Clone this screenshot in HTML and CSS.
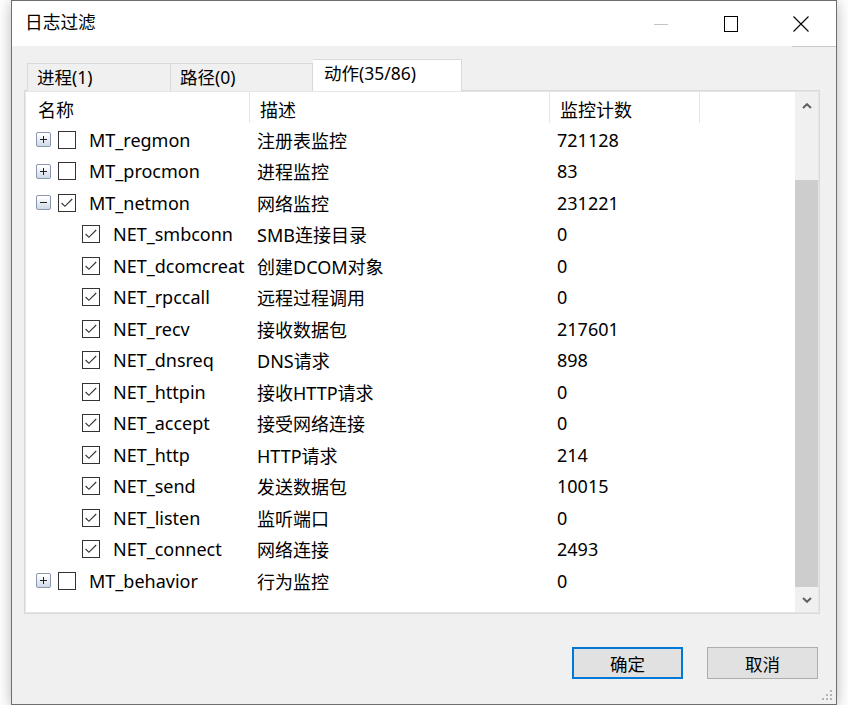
FILE: index.html
```html
<!DOCTYPE html>
<html lang="zh-CN">
<head>
<meta charset="utf-8">
<title>日志过滤</title>
<link rel="stylesheet" href="styles.css">
</head>
<body>
<div class="window">
  <div class="titlebar">
    <span class="title">日志过滤</span>
    <div class="caption">
      <span class="cbtn"><svg width="16" height="16" viewBox="0 0 16 16"><path d="M1 8.5H15" stroke="#c4c4c4" stroke-width="1"/></svg></span>
      <span class="cbtn"><svg width="16" height="16" viewBox="0 0 16 16"><rect x="1.5" y="0.5" width="13" height="15" fill="none" stroke="#000" stroke-width="1"/></svg></span>
      <span class="cbtn close"><svg width="16" height="16" viewBox="0 0 16 16"><path d="M0.5 0.5L15.5 15.5M15.5 0.5L0.5 15.5" stroke="#000" stroke-width="1.1"/></svg></span>
    </div>
  </div>
  <div class="client">
    <div class="tabs">
      <div class="tab t1">进程(1)</div>
      <div class="tab t2">路径(0)</div>
      <div class="tab active">动作(35/86)</div>
    </div>
    <div class="panel">
      <div class="list">
        <div class="main">
          <div class="header">
            <div class="hcell">名称</div>
            <div class="hcell">描述</div>
            <div class="hcell">监控计数</div>
            <div class="hcell last"></div>
          </div>
          <div class="rows">
            <div class="row"><div class="name top"><span class="exp plus"></span><span class="cb"></span><span class="txt">MT_regmon</span></div><div class="desc">注册表监控</div><div class="cnt">721128</div></div>
            <div class="row"><div class="name top"><span class="exp plus"></span><span class="cb"></span><span class="txt">MT_procmon</span></div><div class="desc">进程监控</div><div class="cnt">83</div></div>
            <div class="row"><div class="name top"><span class="exp minus"></span><span class="cb on"></span><span class="txt">MT_netmon</span></div><div class="desc">网络监控</div><div class="cnt">231221</div></div>
            <div class="row"><div class="name child"><span class="cb on"></span><span class="txt">NET_smbconn</span></div><div class="desc">SMB连接目录</div><div class="cnt">0</div></div>
            <div class="row"><div class="name child"><span class="cb on"></span><span class="txt">NET_dcomcreat</span></div><div class="desc">创建DCOM对象</div><div class="cnt">0</div></div>
            <div class="row"><div class="name child"><span class="cb on"></span><span class="txt">NET_rpccall</span></div><div class="desc">远程过程调用</div><div class="cnt">0</div></div>
            <div class="row"><div class="name child"><span class="cb on"></span><span class="txt">NET_recv</span></div><div class="desc">接收数据包</div><div class="cnt">217601</div></div>
            <div class="row"><div class="name child"><span class="cb on"></span><span class="txt">NET_dnsreq</span></div><div class="desc">DNS请求</div><div class="cnt">898</div></div>
            <div class="row"><div class="name child"><span class="cb on"></span><span class="txt">NET_httpin</span></div><div class="desc">接收HTTP请求</div><div class="cnt">0</div></div>
            <div class="row"><div class="name child"><span class="cb on"></span><span class="txt">NET_accept</span></div><div class="desc">接受网络连接</div><div class="cnt">0</div></div>
            <div class="row"><div class="name child"><span class="cb on"></span><span class="txt">NET_http</span></div><div class="desc">HTTP请求</div><div class="cnt">214</div></div>
            <div class="row"><div class="name child"><span class="cb on"></span><span class="txt">NET_send</span></div><div class="desc">发送数据包</div><div class="cnt">10015</div></div>
            <div class="row"><div class="name child"><span class="cb on"></span><span class="txt">NET_listen</span></div><div class="desc">监听端口</div><div class="cnt">0</div></div>
            <div class="row"><div class="name child"><span class="cb on"></span><span class="txt">NET_connect</span></div><div class="desc">网络连接</div><div class="cnt">2493</div></div>
            <div class="row"><div class="name top"><span class="exp plus"></span><span class="cb"></span><span class="txt">MT_behavior</span></div><div class="desc">行为监控</div><div class="cnt">0</div></div>
          </div>
        </div>
        <div class="scrollbar">
          <div class="sbtn up"><svg width="10" height="6" viewBox="0 0 10 6"><path d="M1 5L5 1.2L9 5" fill="none" stroke="#606060" stroke-width="2"/></svg></div>
          <div class="track"><div class="thumb"></div></div>
          <div class="sbtn down"><svg width="10" height="6" viewBox="0 0 10 6"><path d="M1 1L5 4.8L9 1" fill="none" stroke="#606060" stroke-width="2"/></svg></div>
        </div>
      </div>
    </div>
    <div class="buttons">
      <div class="btn default">确定</div>
      <div class="btn">取消</div>
    </div>
    <svg class="grip" width="14" height="14" viewBox="0 0 14 14">
      <g fill="#b4b4b4">
        <rect x="10" y="2" width="2" height="2"/>
        <rect x="6" y="6" width="2" height="2"/><rect x="10" y="6" width="2" height="2"/>
        <rect x="2" y="10" width="2" height="2"/><rect x="6" y="10" width="2" height="2"/><rect x="10" y="10" width="2" height="2"/>
      </g>
    </svg>
  </div>
</div>
</body>
</html>
```

FILE: styles.css
```css
* { box-sizing: border-box; }
html, body { margin: 0; padding: 0; background: #ffffff; }
body {
  font-family: "Noto Sans", "Noto Sans CJK SC", sans-serif;
  font-size: 18px;
  color: #000;
}
.window {
  margin-left: 11px;
  width: 826px;
  height: 705px;
  border: 1px solid #6e6e6e;
  background: #f0f0f0;
  box-shadow: 0 2px 14px rgba(0, 0, 0, 0.28);
  display: flex;
  flex-direction: column;
}
.titlebar {
  height: 45px;
  background: #fff;
  display: flex;
  align-items: center;
  justify-content: space-between;
  flex: none;
}
.title {
  padding-left: 13px;
  font-size: 17.7px;
  line-height: 1;
  margin-top: -1px;
}
.caption { display: flex; height: 100%; }
.cbtn {
  width: 70px;
  height: 100%;
  display: flex;
  align-items: center;
  justify-content: center;
}
.cbtn svg { display: block; }
.cbtn.close { position: relative; }
.cbtn.close::after {
  content: "";
  position: absolute;
  left: 26px; right: 0; bottom: -1px;
  height: 1px;
  background: #c8c8c8;
}
.client {
  flex: 1;
  position: relative;
  padding: 13px 16px 0 12px;
  display: flex;
  flex-direction: column;
}
.tabs {
  display: flex;
  height: 32px;
  margin-left: 3px;
  margin-bottom: -1px;
  position: relative;
  z-index: 1;
  align-items: flex-end;
}
.tab {
  height: 28px;
  border: 1px solid #d9d9d9;
  border-bottom: none;
  background: #f0f0f0;
  padding-left: 9px;
  font-size: 17.5px;
  line-height: 26px;
  white-space: nowrap;
}
.tab.t1 { width: 143px; border-right: none; }
.tab.t2 { width: 143px; }
.tab.active {
  width: 149px;
  height: 32px;
  background: #fff;
  border-left: none;
  padding-left: 11px;
  line-height: 27px;
}
.panel {
  height: 524px;
  border: 1px solid #d9d9d9;
  background: #fff;
  flex: none;
}
.list {
  height: 100%;
  border: 1px solid #e6e6e6;
  display: flex;
}
.main { flex: 1; min-width: 0; }
.header {
  height: 32px;
  display: grid;
  grid-template-columns: 224px 300px 150px 1fr;
}
.hcell {
  border-right: 1px solid #e5e5e5;
  padding-left: 10px;
  padding-top: 2px;
  display: flex;
  align-items: center;
  margin: 0 0 1px;
  white-space: nowrap;
}
.hcell:first-child { padding-left: 12px; }
.hcell.last { border-right: none; }
.row {
  height: 31.5px;
  display: grid;
  grid-template-columns: 224px 300px 1fr;
  align-items: center;
  white-space: nowrap;
}
.name {
  display: flex;
  align-items: center;
  overflow: hidden;
}
.name.top { padding-left: 10px; }
.name.child { padding-left: 56px; }
.exp {
  width: 15px;
  height: 15px;
  border: 1px solid #8a97ad;
  border-radius: 2px;
  background: linear-gradient(#ffffff 10%, #cfd8e6);
  margin-right: 7px;
  position: relative;
  flex: none;
}
.exp::before {
  content: "";
  position: absolute;
  left: 3px; top: 6px;
  width: 7px; height: 1px;
  background: #222;
}
.exp.plus::after {
  content: "";
  position: absolute;
  left: 6px; top: 3px;
  width: 1px; height: 7px;
  background: #222;
}
.cb {
  width: 18px;
  height: 18px;
  border: 1px solid #333;
  background: #fff;
  margin-right: 13px;
  flex: none;
}
.cb.on {
  background: #fff url("data:image/svg+xml;utf8,<svg xmlns='http://www.w3.org/2000/svg' width='16' height='16' viewBox='0 0 16 16'><path d='M2.6 8L5.9 11.3L13.2 4' fill='none' stroke='%23333' stroke-width='1.15'/></svg>") no-repeat center;
}
.txt { white-space: nowrap; }
.desc { padding-left: 7px; }
.cnt { padding-left: 7px; }
.scrollbar {
  width: 23px;
  background: #f0f0f0;
  display: flex;
  flex-direction: column;
  flex: none;
}
.sbtn {
  display: flex;
  align-items: center;
  justify-content: center;
  flex: none;
}
.sbtn.up { height: 28px; }
.sbtn.down { height: 24px; }
.track { flex: 1; padding-top: 60px; }
.thumb { height: 407px; background: #cdcdcd; }
.buttons {
  display: flex;
  justify-content: flex-end;
  gap: 24px;
  margin-top: 33px;
  padding-right: 2px;
}
.btn {
  width: 111px;
  height: 32px;
  border: 1px solid #adadad;
  background: #e1e1e1;
  display: flex;
  align-items: center;
  justify-content: center;
  font-size: 17.5px;
}
.btn.default { border: 2px solid #0078d7; }
.grip {
  position: absolute;
  right: 2px;
  bottom: 2px;
}
```
